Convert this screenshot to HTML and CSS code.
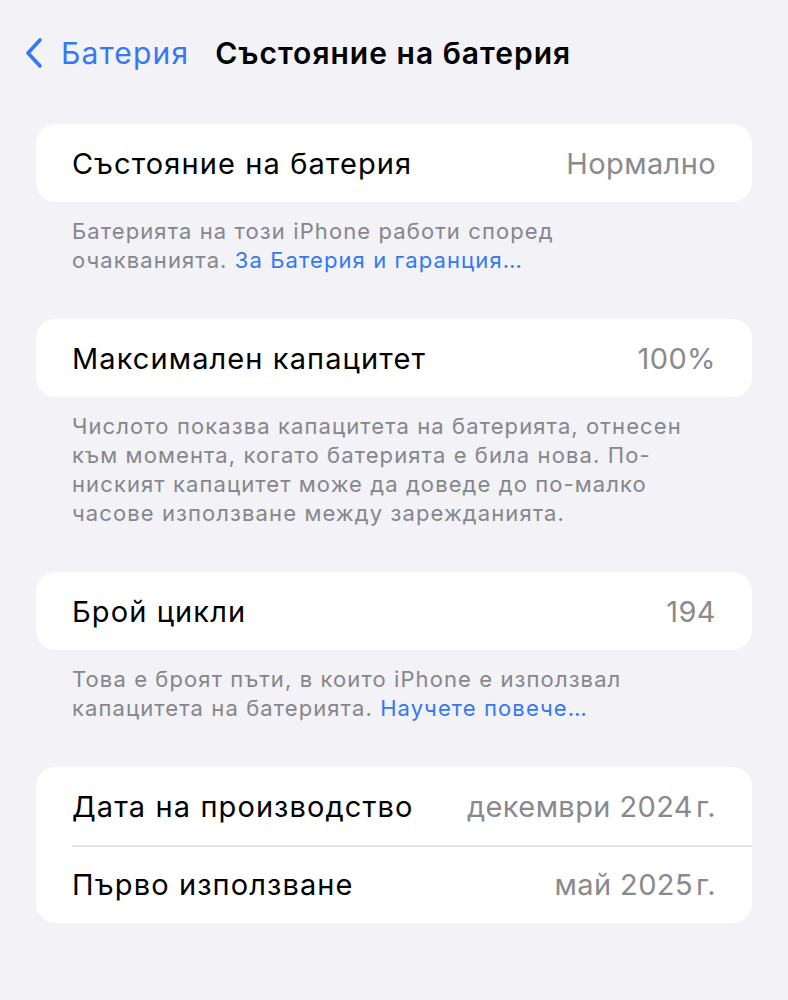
FILE: index.html
```html
<!DOCTYPE html>
<html lang="bg">
  <head>
    <meta charset="utf-8" />
    <meta name="viewport" content="width=device-width, initial-scale=1" />
    <title>Състояние на батерия</title>
    <link rel="stylesheet" href="styles.css">
  </head>
  <body>
    <header class="nav">
      <a class="back" href="#">
        <svg class="chevron" viewBox="0 0 20 32" width="20" height="32">
          <path d="M16 3 L4 16 L16 29" fill="none" stroke="#3478f6" stroke-width="3.6" stroke-linecap="round" stroke-linejoin="round" />
        </svg>
        Батерия
      </a>
      <h1 class="title">Състояние на батерия</h1>
    </header>

    <section class="group">
      <div class="card">
        <div class="row">
          <span class="label">Състояние на батерия</span>
          <span class="value">Нормално</span>
        </div>
      </div>
      <p class="footer">
        Батерията на този iPhone работи според очакванията.
        <a href="#">За Батерия и гаранция…</a>
      </p>
    </section>

    <section class="group">
      <div class="card">
        <div class="row">
          <span class="label">Максимален капацитет</span>
          <span class="value">100%</span>
        </div>
      </div>
      <p class="footer">
        Числото показва капацитета на батерията, отнесен към момента, когато батерията е била нова. По-ниският капацитет може да доведе до по-малко часове използване между зарежданията.
      </p>
    </section>

    <section class="group">
      <div class="card">
        <div class="row">
          <span class="label">Брой цикли</span>
          <span class="value">194</span>
        </div>
      </div>
      <p class="footer">
        Това е броят пъти, в които iPhone е използвал капацитета на батерията.
        <a href="#">Научете повече…</a>
      </p>
    </section>

    <section class="group">
      <div class="card">
        <div class="row">
          <span class="label">Дата на производство</span>
          <span class="value">декември 2024&#8202;г.</span>
        </div>
        <div class="row">
          <span class="label">Първо използване</span>
          <span class="value">май 2025&#8202;г.</span>
        </div>
      </div>
    </section>
  </body>
</html>
```

FILE: styles.css
```css
body {
  background-color: #f2f2f7;
  margin: 0;
  font-family: Inter, "Noto Sans", sans-serif;
  color: #000;
}

a {
  color: #3478f6;
  text-decoration: none;
}

.nav {
  display: flex;
  align-items: center;
  height: 60px;
  padding: 23px 0 0 24px;
  gap: 26px;
}

.back {
  display: flex;
  align-items: center;
  gap: 17px;
  font-size: 30px;
  letter-spacing: 1.2px;
}

.title {
  margin: 0;
  font-size: 30px;
  font-weight: 600;
  letter-spacing: 1px;
}

.nav + .group {
  margin-top: 41px;
}

.group {
  margin: 0 36px 44px;
}

.card {
  background: #fff;
  border-radius: 20px;
  overflow: hidden;
}

.row {
  display: flex;
  justify-content: space-between;
  align-items: center;
  height: 78px;
  padding: 0 36px;
  font-size: 29px;
  letter-spacing: 1.1px;
  position: relative;
}

.row + .row::before {
  content: "";
  position: absolute;
  top: 0;
  left: 36px;
  right: 0;
  height: 2px;
  background: #e4e4e8;
}

.value {
  color: #8a8a8e;
  letter-spacing: 0.4px;
}

.footer {
  margin: 0;
  padding: 15px 36px 0;
  font-size: 22px;
  letter-spacing: 1.1px;
  line-height: 29px;
  color: #86868b;
}
```
